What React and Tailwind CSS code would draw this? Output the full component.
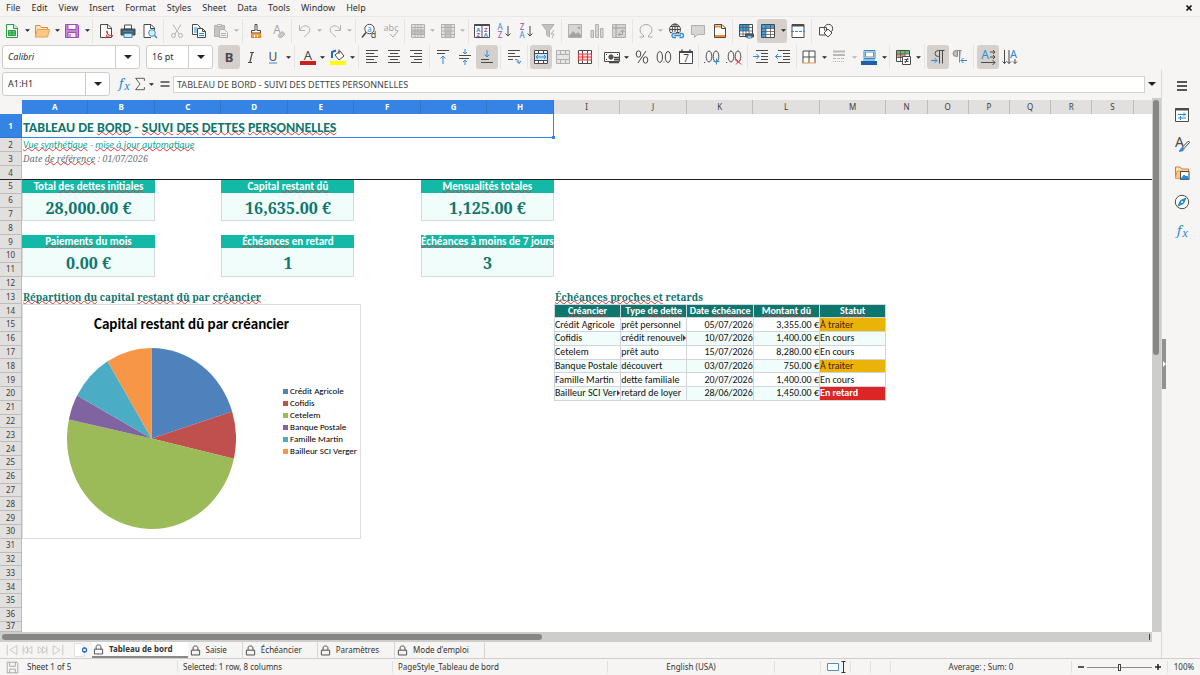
import React from "react";
import clsx from "clsx";

const GRAY = "#4a4a4a";
const BLUE = "#2a8dd4";

function Svg({ children, size = "size-4" }) {
  return (
    <svg viewBox="0 0 16 16" className={clsx("shrink-0 overflow-visible", size)} fill="none" stroke={GRAY} strokeWidth="1" aria-hidden="true">
      {children}
    </svg>
  );
}

function Glyph({ x = 8, y = 12, size = 12, color = GRAY, italic, bold, serif, children }) {
  return (
    <text
      x={x}
      y={y}
      fontSize={size}
      fill={color}
      stroke="none"
      textAnchor="middle"
      fontStyle={italic ? "italic" : "normal"}
      fontWeight={bold ? 700 : 400}
      fontFamily={serif ? "Noto Serif, Liberation Serif, serif" : "Noto Sans, sans-serif"}
    >
      {children}
    </text>
  );
}

/* horizontal strokes, each one is [x1, x2, y] */
function Lines({ rows, color = GRAY }) {
  return <path stroke={color} d={rows.map(([a, b, y]) => `M${a} ${y}H${b}`).join("")} />;
}

const icons = {
  newDoc: (
    <Svg>
      <path d="M2.500 1.500h7.500l3.500 3.500v9.500h-11z" fill="#fff" stroke="#2e9e44" />
      <path d="M9.500 1v4.500h4.500" stroke="#2e9e44" fill="#c9edcf" />
      <path d="M4.500 7.500h7v5h-7zM4.500 10h7M8 7.500v5" fill="#65c978" stroke="#2e9e44" />
    </Svg>
  ),
  open: (
    <Svg>
      <path d="M1.500 13.500v-11h4.500l1.500 2h6v2" fill="#fbe3bd" stroke="#e08b32" />
      <path d="M1 14l2.500-7.500h12l-2 7.500z" fill="#fbc985" stroke="#e9a052" />
    </Svg>
  ),
  save: (
    <Svg>
      <path d="M1.500 1.500h12l1 1v12h-13z" fill="#c782d6" stroke="#9c4fb5" />
      <path d="M4 1.500h8v5h-8z" fill="#fff" stroke="#9c4fb5" />
      <path d="M4 14.500v-5h8v5z" fill="#f5e7f8" stroke="#9c4fb5" />
      <path d="M6 11v3" stroke="#9c4fb5" />
    </Svg>
  ),
  pdf: (
    <Svg>
      <path d="M2.500 1.500h7.500l3.500 3.500v9.500h-11z" fill="#fff" />
      <path d="M9.500 1.500v4h4" />
      <path d="M7 15c1.500-2 3-4.500 2.500-6.500-.3-1.200-1.500-.5-1 .7.800 2 3.500 4 6.500 3.600-2-1-5 .2-8 2.200z" stroke="#e0343c" />
    </Svg>
  ),
  print: (
    <Svg>
      <path d="M4.500 2h7v4h-7z" fill="#fff" />
      <path d="M1 6h14v6h-14z" fill="#58595b" />
      <path d="M3 8.500h10" stroke={BLUE} />
      <path d="M4 10.500h8v4h-8z" fill="#cfe8fa" stroke={BLUE} />
    </Svg>
  ),
  preview: (
    <Svg>
      <path d="M12.500 7v-2l-3.500-3.500h-7v13h7" fill="#fff" />
      <path d="M8.500 1.500v4h4" />
      <circle cx="10" cy="10" r="3.300" fill="#d9effc" stroke={BLUE} />
      <path d="M12.500 12.500l2.500 2.500" stroke={BLUE} strokeWidth="1.500" />
    </Svg>
  ),
  cut: (
    <Svg>
      <g stroke="#b3b3b1">
        <path d="M4 1.500l6 9.500M12 1.500l-6 9.500" />
        <circle cx="4.500" cy="12.500" r="2" />
        <circle cx="11.500" cy="12.500" r="2" />
      </g>
    </Svg>
  ),
  copy: (
    <Svg>
      <path d="M1.500 1.500h5l2.500 2.500v7.500h-7.500z" fill="#fff" />
      <path d="M3 5h3M3 7h3M3 9h3" stroke={BLUE} />
      <path d="M6.500 5.500h5l3 3v6h-8z" fill="#fff" />
      <path d="M11.500 5.500v3h3" />
      <path d="M8 10.500h5M8 12.500h5" stroke={BLUE} />
    </Svg>
  ),
  paste: (
    <Svg>
      <path d="M1.500 2.500h10v11h-10z" fill="#c5c5c3" stroke="#b0b0ae" />
      <path d="M4.500 1.500h4v2h-4z" fill="#eee" stroke="#b0b0ae" />
      <path d="M6.500 6.500h5l3 3v5h-8z" fill="#f2f2f0" stroke="#b0b0ae" />
      <path d="M8 10.500h5M8 12.500h5" stroke="#b0b0ae" />
    </Svg>
  ),
  clone: (
    <Svg>
      <path d="M7 1.500h2v6h3.500v2.500h-9v-2.500h3.500z" fill="#fff" />
      <path d="M3.500 10.500h9v4h-9z" fill="#f7a44a" stroke="#e07c1c" />
      <path d="M6.500 12v2.500M9.500 12v2.500" stroke="#fff" />
    </Svg>
  ),
  clear: (
    <Svg>
      <Glyph x={7} y={11} size={12} color="#a8a8a6">A</Glyph>
      <path d="M8 12.500l4-4 3 2.500-3.500 3.500h-2z" fill="#c8c8c6" stroke="#b0b0ae" />
    </Svg>
  ),
  undo: (
    <Svg>
      <path d="M2.500 2v5.500h5.500M2.500 7.500c2-4.500 6-5.500 8.500-4s2.500 5-.5 7.500l-3.500 3" stroke="#b3b3b1" />
    </Svg>
  ),
  redo: (
    <Svg>
      <path d="M13.500 2v5.500h-5.500M13.500 7.500c-2-4.500-6-5.500-8.500-4s-2.500 5 .5 7.500l3.500 3" stroke="#b3b3b1" />
    </Svg>
  ),
  find: (
    <Svg>
      <circle cx="8.500" cy="6" r="4.700" fill="#fff" />
      <path d="M5 9.500l-4 5" strokeWidth="1.500" />
      <Glyph x={8.500} y={8.500} size={8} color={BLUE}>a</Glyph>
      <Glyph x={12.500} y={15} size={9}>d</Glyph>
    </Svg>
  ),
  spell: (
    <Svg>
      <Glyph x={8} y={7.500} size={9} color="#a8a8a6">abc</Glyph>
      <path d="M7 11l3 3 5-6" stroke="#a8a8a6" />
    </Svg>
  ),
  tableRow: (
    <Svg>
      <path d="M1.500 1.500h13v13h-13z" fill="#e4e4e2" stroke="#b0b0ae" />
      <path d="M2 6h12v5h-12z" fill="#c2c2c0" stroke="none" />
      <path d="M1.500 4.500h13M1.500 8h13M1.500 11.500h13M5 1.500v13M8 1.500v13M11 1.500v13" stroke="#b0b0ae" />
    </Svg>
  ),
  tableCol: (
    <Svg>
      <path d="M1.500 1.500h13v13h-13z" fill="#e4e4e2" stroke="#b0b0ae" />
      <path d="M5 2h6v12h-6z" fill="#c2c2c0" stroke="none" />
      <path d="M1.500 4.500h13M1.500 8h13M1.500 11.500h13M5 1.500v13M11 1.500v13" stroke="#b0b0ae" />
    </Svg>
  ),
  sort: (
    <Svg>
      <path d="M.5 1.500h15v13h-15z" fill="#fff" />
      <path d="M.5 2h15" strokeWidth="2" />
      <path d="M8 2v12.500" />
      <Glyph x={4.300} y={8.500} size={6} color={BLUE} bold>A</Glyph>
      <Glyph x={4.300} y={14} size={6} color="#a347ba" bold>Z</Glyph>
      <Glyph x={11.800} y={8.500} size={6} color="#a347ba" bold>Z</Glyph>
      <Glyph x={11.800} y={14} size={6} color={BLUE} bold>A</Glyph>
    </Svg>
  ),
  sortAsc: (
    <Svg>
      <Glyph x={4} y={7} size={8} color={BLUE}>A</Glyph>
      <Glyph x={4} y={15} size={8} color="#a347ba">Z</Glyph>
      <path d="M12 3v10M9.500 10.500l2.500 2.500 2.500-2.500" />
    </Svg>
  ),
  sortDesc: (
    <Svg>
      <Glyph x={4} y={7} size={8} color="#a347ba">Z</Glyph>
      <Glyph x={4} y={15} size={8} color={BLUE}>A</Glyph>
      <path d="M12 3v10M9.500 10.500l2.500 2.500 2.500-2.500" />
    </Svg>
  ),
  filter: (
    <Svg>
      <path d="M2 1.500h12l-4.500 6v6.500l-3-2v-4.500z" fill="#c2c2c0" stroke="#b0b0ae" />
      <path d="M14 7l-3 4h3l-2 4" stroke="#b0b0ae" />
    </Svg>
  ),
  image: (
    <Svg>
      <path d="M1.500 1.500h13v13h-13z" fill="#d6d6d4" stroke="#b0b0ae" />
      <path d="M2 13l4-5 3 3 2-2 3 3v2h-12z" fill="#a3a3a1" stroke="none" />
      <path d="M11 4l2 1.500" stroke="#a3a3a1" strokeWidth="2" />
    </Svg>
  ),
  chart: (
    <Svg>
      <path d="M2 7.500h2.500v7h-2.500zM6.500 1.500h3v13h-3zM11.500 5.500h2.500v9h-2.500z" fill="#d6d6d4" stroke="#b0b0ae" />
    </Svg>
  ),
  pivot: (
    <Svg>
      <path d="M1.500 1.500h13v13h-13z" fill="#d6d6d4" stroke="#b0b0ae" />
      <path d="M1.500 5h13M5 1.500v13M8 11.500h3.500v-4M9.500 9l2-2 2 2M9 9.500l-2 2 2 2" stroke="#9c9c9a" />
    </Svg>
  ),
  omega: (
    <Svg>
      <path d="M1.500 14h4v-1.500c-6-4-3.500-11 2.500-11s8.500 7 2.500 11v1.500h4" stroke="#a8a8a6" />
    </Svg>
  ),
  link: (
    <Svg>
      <circle cx="7" cy="6.500" r="5.500" />
      <path d="M1.500 6.500h11M7 1v11M2.500 3.500h9M2.500 9.500h9" />
      <ellipse cx="7" cy="6.500" rx="2.700" ry="5.500" />
      <path d="M8 10.500h-2a2 2 0 0 0 0 4h2M11.500 10.500h2a2 2 0 0 1 0 4h-2M7 12.500h6" stroke="#f6f5f4" strokeWidth="3" />
      <path d="M8 10.500h-2a2 2 0 0 0 0 4h2M11.500 10.500h2a2 2 0 0 1 0 4h-2M7 12.500h6" stroke={BLUE} strokeWidth="1.300" />
    </Svg>
  ),
  comment: (
    <Svg>
      <path d="M1.500 2.500h13v9h-7l-3 3v-3h-3z" fill="#d6d6d4" stroke="#b0b0ae" />
    </Svg>
  ),
  header: (
    <Svg>
      <path d="M2.500 1.500h7.500l3.500 3.500v9.500h-11z" fill="#fff" />
      <path d="M9.500 1.500v4h4" />
      <path d="M3 3.500h6M3 13h10" stroke="#f28c28" strokeWidth="2" />
    </Svg>
  ),
  printRange: (
    <Svg>
      <path d="M1.500 1.500h13v12h-13z" fill="#fff" />
      <path d="M2 2h9v6h-9z" fill="#3ea0e4" stroke="none" />
      <path d="M1.500 4.500h13M1.500 8h13M1.500 11h13M5 1.500v12M8 1.500v12M11 1.500v12" strokeWidth=".7" />
      <path d="M7.500 11h8v3h-8z" fill="#58595b" />
      <path d="M9.500 13h4v2h-4z" fill="#d9effc" stroke={BLUE} />
    </Svg>
  ),
  freeze: (
    <Svg>
      <path d="M1.500 1.500h13v13h-13z" fill="#fff" />
      <path d="M2 2h12v3.500h-8v8.500h-4z" fill="#3ea0e4" stroke="none" />
      <path d="M1.500 5.500h13M1.500 8.500h13M1.500 11.500h13M6 1.500v13M10.500 1.500v13" strokeWidth=".7" />
    </Svg>
  ),
  split: (
    <Svg>
      <path d="M2 1.500h12v13h-12z" fill="#fff" />
      <path d="M2 2.500h12" strokeWidth="2" />
      <path d="M1 8.500h14" stroke={BLUE} strokeDasharray="3 1" />
    </Svg>
  ),
  shapes: (
    <Svg>
      <path d="M1.500 4.500h7v7.500h-7z" fill="#fff" />
      <circle cx="10.500" cy="5.500" r="4.200" />
      <path d="M10 6l4 4-4 4-4-4z" fill="#fff" />
    </Svg>
  ),
  bold: <Svg><Glyph y={12.500} size={13} bold>B</Glyph></Svg>,
  italic: <Svg><path d="M7 3.500h4M5 13.500h4M9.300 3.500l-2.500 10" strokeWidth="1.200" /></Svg>,
  underline: (
    <Svg>
      <Glyph y={11.500} size={12}>U</Glyph>
      <path d="M4 14h8" stroke={BLUE} />
    </Svg>
  ),
  fontColor: (
    <Svg>
      <Glyph y={11} size={13}>A</Glyph>
      <path d="M0 14h16" stroke="#c9211e" strokeWidth="4" />
    </Svg>
  ),
  highlight: (
    <Svg>
      <path d="M5 6l5-4 4 5-5 4z" fill="#fff" />
      <path d="M9 5v-4.500" />
      <path d="M2 9v-6l4-1.500" stroke="#1d6fb8" strokeWidth="2" />
      <path d="M0 14h16" stroke="#ff0" strokeWidth="4" />
    </Svg>
  ),
  left: <Svg><Lines rows={[[2, 14, 1.500], [2, 10, 4.500], [2, 14, 7.500], [2, 10, 10.500], [2, 13, 13.500]]} /></Svg>,
  center: <Svg><Lines rows={[[2, 14, 1.500], [4, 12, 4.500], [2, 14, 7.500], [4, 12, 10.500], [2, 14, 13.500]]} /></Svg>,
  right: <Svg><Lines rows={[[2, 14, 1.500], [6, 14, 4.500], [2, 14, 7.500], [6, 14, 10.500], [3, 14, 13.500]]} /></Svg>,
  top: (
    <Svg>
      <Lines rows={[[2, 14, 1.500], [2, 10, 4.500]]} />
      <path d="M8 15v-8M5.500 9.500l2.500-2.500 2.500 2.500" stroke={BLUE} />
    </Svg>
  ),
  middle: (
    <Svg>
      <Lines rows={[[2, 14, 6.500], [2, 12, 9.500]]} />
      <path d="M8 0v5M6 3l2 2 2-2M8 16v-5M6 13l2-2 2 2" stroke={BLUE} />
    </Svg>
  ),
  bottom: (
    <Svg>
      <Lines rows={[[2, 10, 10.500], [2, 14, 13.500]]} />
      <path d="M8 1v7M5.500 5.500l2.500 2.500 2.500-2.500" stroke={BLUE} />
    </Svg>
  ),
  wrap: (
    <Svg>
      <Lines rows={[[2, 14, 1.500], [2, 9, 4.500], [2, 14, 7.500], [2, 7, 10.500]]} />
      <path d="M9 10.500c3 0 4 1 4 4M10.500 12l2.500 2.500 2-2.500" stroke={BLUE} />
    </Svg>
  ),
  merge: (
    <Svg>
      <path d="M1.500 1.500h13v13h-13zM1.500 4.500h13M1.500 11.500h13M5.500 1.500v3M10.500 1.500v3M5.500 11.500v3M10.500 11.500v3" fill="#fff" />
      <path d="M2 5h12v6h-12z" fill="#c9e6fb" stroke="none" />
      <path d="M3 8h10M5 6l-2 2 2 2M11 6l2 2-2 2" stroke={BLUE} />
    </Svg>
  ),
  mergeOff: (
    <Svg>
      <path d="M1.500 1.500h13v13h-13zM1.500 5.500h13M1.500 10.500h13M5.500 1.500v4M10.500 1.500v4M5.500 10.500v4M10.500 10.500v4" fill="#e6e6e4" stroke="#b0b0ae" />
    </Svg>
  ),
  unmerge: (
    <Svg>
      <path d="M1.500 1.500h13v13h-13z" fill="#fff" />
      <path d="M5.500 1.500v3M10.500 1.500v3M5.500 11.500v3M10.500 11.500v3" />
      <path d="M1.500 5h13v6h-13zM5.500 5v6M10.500 5v6M1.500 8h13" stroke="#e0343c" fill="#ffe4e2" />
    </Svg>
  ),
  currency: (
    <Svg>
      <path d="M.5 3.500h15v9h-15z" fill="#fff" />
      <circle cx="7" cy="8" r="2.200" fill="#58595b" />
      <path d="M2 5.500h1M13 5.500h1M2 10.500h1" />
      <path d="M10 8.500h5M10 10.500h5M10 12.500h5M5 13.500h10" strokeWidth="1.500" />
    </Svg>
  ),
  percent: (
    <Svg>
      <ellipse cx="4.500" cy="5" rx="2.300" ry="3.200" />
      <ellipse cx="11.500" cy="11" rx="2.300" ry="3.200" />
      <path d="M12 2l-8 12" />
    </Svg>
  ),
  number: (
    <Svg>
      <ellipse cx="3.800" cy="8" rx="2.700" ry="5.500" />
      <ellipse cx="12" cy="8" rx="2.700" ry="5.500" />
      <path d="M7.500 13h1" />
    </Svg>
  ),
  date: (
    <Svg>
      <path d="M1.500 2.500h13v12h-13z" fill="#fff" />
      <path d="M1 3h14" strokeWidth="2" />
      <path d="M4 .5v3M12 .5v3" strokeWidth="1.500" />
      <Glyph y={13} size={10}>7</Glyph>
    </Svg>
  ),
  addDecimal: (
    <Svg>
      <path d="M0 13.500h1.200" />
      <ellipse cx="5" cy="7.500" rx="2.800" ry="5.500" />
      <ellipse cx="12" cy="7.500" rx="2.800" ry="5.500" />
      <path d="M12.500 9.500v6M9.500 12.500h6" stroke={BLUE} />
    </Svg>
  ),
  delDecimal: (
    <Svg>
      <path d="M0 13.500h1.200" />
      <ellipse cx="5" cy="7.500" rx="2.800" ry="5.500" />
      <ellipse cx="12" cy="7.500" rx="2.800" ry="5.500" />
      <path d="M10 10l5 5.500M15 10l-5 5.500" stroke="#e0343c" />
    </Svg>
  ),
  indent: (
    <Svg>
      <Lines rows={[[3, 15, 1.500], [8, 15, 4.500], [8, 15, 7.500], [8, 15, 10.500], [3, 15, 13.500]]} />
      <path d="M0 7.500h6M3.500 5l2.500 2.500-2.500 2.500" stroke={BLUE} />
    </Svg>
  ),
  outdent: (
    <Svg>
      <Lines rows={[[3, 15, 1.500], [8, 15, 4.500], [8, 15, 7.500], [8, 15, 10.500], [3, 15, 13.500]]} />
      <path d="M6.500 7.500h-6M3 5l-2.500 2.500 2.500 2.500" stroke={BLUE} />
    </Svg>
  ),
  borders: (
    <Svg>
      <path d="M2 14v-12h12v12M8 2v12M2 8h12" fill="#fff" />
      <path d="M1.500 14h13" stroke="#e09a4a" />
    </Svg>
  ),
  borderStyle: (
    <Svg>
      <path d="M2 2.500h12M2 6h12" stroke="#b8b8b6" strokeWidth="2" />
      <path d="M2 9.500h12" stroke="#b8b8b6" strokeDasharray="3 1" />
      <path d="M2 12.500h12" stroke="#b8b8b6" strokeDasharray="1 1" />
    </Svg>
  ),
  borderColor: (
    <Svg>
      <path d="M3 1.500h11v8h-11z" fill="#e9f4fc" stroke={BLUE} />
      <path d="M4.500 3h8v5h-8z" fill="#fff" stroke="#888" />
      <path d="M0 14h16" stroke="#1d5fa8" strokeWidth="4" />
      <path d="M2 11h12" stroke={BLUE} />
    </Svg>
  ),
  conditional: (
    <Svg>
      <path d="M1.500 1.500h13v11h-13z" fill="#fff" />
      <path d="M2 2h12v3h-12z" fill="#62c46f" stroke="none" />
      <path d="M2 5h8v4h-8z" fill="#f08a80" stroke="none" />
      <path d="M1.500 5h13M1.500 8.500h13M5.500 1.500v11M10 1.500v11" strokeWidth=".7" />
      <path d="M7.500 7.500h8v8h-8z" fill="#fff" />
      <path d="M9.500 10.500h4M9.500 12.500h4M13 9l-3 5" />
    </Svg>
  ),
  ltr: (
    <Svg>
      <path d="M14.500 1.500h-6a3.500 3 0 0 0 0 6h1M9.500 1.500v13M12.500 1.500v13" />
      <path d="M1 11.500h6M4.500 9l2.500 2.500-2.500 2.500" stroke={BLUE} />
    </Svg>
  ),
  rtl: (
    <Svg>
      <path d="M9.500 1.500h-5a3.500 3 0 0 0 0 6h1v-6h2v12" fill="#bcbcba" stroke="#8a8a88" />
      <path d="M15 11.500h-6M11.500 9l-2.500 2.500 2.500 2.500" stroke={BLUE} />
    </Svg>
  ),
  textH: (
    <Svg>
      <Glyph x={5} y={10} size={12} color={BLUE}>A</Glyph>
      <path d="M10 3h5M13 1l2 2-2 2M10 8h5M13 6l2 2-2 2M1 13.500h14M12.500 11l2.500 2.500-2.500 2.500" />
    </Svg>
  ),
  textV: (
    <Svg>
      <Glyph x={11.500} y={9} size={11} color={BLUE}>A</Glyph>
      <path d="M2.500 1v13.500M.5 12.500l2 2 2-2M7 1v13.500M5 12.500l2 2 2-2M13 10v4.500M11 12.500l2 2 2-2" />
    </Svg>
  ),
  properties: (
    <Svg>
      <path d="M1.500 1.500h13v13h-13z" fill="#fff" />
      <path d="M1 2.500h14" strokeWidth="2" />
      <path d="M4 7.500h8M4 11h8M10 5.500v4M6.500 9v4" stroke={BLUE} />
    </Svg>
  ),
  styles: (
    <Svg>
      <Glyph x={5.500} y={11} size={14}>A</Glyph>
      <path d="M14.500 5l-6 6 1.500 1.500 5.500-6z" fill="#fff" />
      <path d="M8 11.500l2 2c-1 1.500-3 2-5 1.500 1.500-.5 1.500-2.500 3-3.500z" fill={BLUE} stroke={BLUE} />
    </Svg>
  ),
  gallery: (
    <Svg>
      <path d="M1.500 13.500v-11.500h4.500l1.500 2h7v2" fill="#fbe3bd" stroke="#e0762c" />
      <path d="M1.500 13.500l1.500-7.500h6v7.500z" fill="#fbc985" stroke="#e9a052" />
      <path d="M6.500 6.500h8.500v8h-8.500z" fill="#fff" />
      <path d="M7 14l3-4 2 2 1-1 2 3z" fill={BLUE} stroke={BLUE} />
    </Svg>
  ),
  navigator: (
    <Svg>
      <circle cx="8" cy="8" r="6.700" fill="#fff" />
      <path d="M12 4l-2.500 5.500-5.500 2.500 2.500-5.500z" fill={BLUE} stroke={BLUE} />
      <circle cx="8" cy="8" r="1" fill="#fff" stroke="none" />
    </Svg>
  ),
  fx: (
    <Svg>
      <Glyph x={5} y={12} size={13} color={BLUE} italic serif>f</Glyph>
      <Glyph x={11} y={14} size={11} color={BLUE} italic serif>x</Glyph>
    </Svg>
  ),
  sum: <Svg size="size-3.5"><path d="M13 4.500v-3h-10l5 6.500-5 6.500h10v-3" /></Svg>,
  equals: <Svg><path d="M3.500 6h9M3.500 10h9" strokeWidth="1.500" /></Svg>,
  lock: (
    <Svg size="size-[11px]">
      <path d="M2 7.500h12v7h-12zM4.500 7.500v-3.500c0-3.500 7-3.500 7 0v3.500" strokeWidth="1.400" />
    </Svg>
  ),
};

// i: icon, l: label, m: has a drop-down arrow, on: pressed, off: disabled
const standardBar = [
  { w: "w-[93px]", tools: [{ i: "newDoc", l: "New", m: 1 }, { i: "open", l: "Open", m: 1 }, { i: "save", l: "Save", m: 1 }] },
  { w: "w-[71px]", tools: [{ i: "pdf", l: "Export as PDF" }, { i: "print", l: "Print" }, { i: "preview", l: "Print preview" }] },
  { w: "w-[79px]", tools: [{ i: "cut", l: "Cut", off: 1 }, { i: "copy", l: "Copy" }, { i: "paste", l: "Paste", m: 1, off: 1 }] },
  { w: "w-[49px]", tools: [{ i: "clone", l: "Clone formatting" }, { i: "clear", l: "Clear formatting", off: 1 }] },
  { w: "w-[64px]", tools: [{ i: "undo", l: "Undo", m: 1, off: 1 }, { i: "redo", l: "Redo", m: 1, off: 1 }] },
  { w: "w-[49px]", tools: [{ i: "find", l: "Find and replace" }, { i: "spell", l: "Spelling", off: 1 }] },
  { w: "w-[64px]", tools: [{ i: "tableRow", l: "Row", m: 1, off: 1 }, { i: "tableCol", l: "Column", m: 1, off: 1 }] },
  { w: "w-[93px]", tools: [{ i: "sort", l: "Sort" }, { i: "sortAsc", l: "Sort ascending" }, { i: "sortDesc", l: "Sort descending" }, { i: "filter", l: "AutoFilter", off: 1 }] },
  { w: "w-[71px]", tools: [{ i: "image", l: "Image", off: 1 }, { i: "chart", l: "Chart", off: 1 }, { i: "pivot", l: "Pivot table", off: 1 }] },
  { w: "w-[100px]", tools: [{ i: "omega", l: "Special character", m: 1, off: 1 }, { i: "link", l: "Hyperlink" }, { i: "comment", l: "Comment", off: 1 }, { i: "header", l: "Headers and footers" }] },
  { w: "w-[79px]", tools: [{ i: "printRange", l: "Print area" }, { i: "freeze", l: "Freeze panes", m: 1, on: 1 }, { i: "split", l: "Split window" }] },
  { w: "w-[27px]", last: 1, tools: [{ i: "shapes", l: "Draw functions" }] },
];

const formatBar = [
  { w: "w-[79px]", tools: [{ i: "bold", l: "Bold", on: 1 }, { i: "italic", l: "Italic" }, { i: "underline", l: "Underline", m: 1 }] },
  { w: "w-[64px]", tools: [{ i: "fontColor", l: "Font color", m: 1 }, { i: "highlight", l: "Background color", m: 1 }] },
  { w: "w-[71px]", tools: [{ i: "left", l: "Align left" }, { i: "center", l: "Center" }, { i: "right", l: "Align right" }] },
  { w: "w-[71px]", tools: [{ i: "top", l: "Align top" }, { i: "middle", l: "Center vertically" }, { i: "bottom", l: "Align bottom", on: 1 }] },
  { w: "w-[27px]", tools: [{ i: "wrap", l: "Wrap text" }] },
  { w: "w-[71px]", tools: [{ i: "merge", l: "Merge and center", on: 1 }, { i: "mergeOff", l: "Merge cells", off: 1 }, { i: "unmerge", l: "Unmerge cells" }] },
  { w: "w-[100px]", tools: [{ i: "currency", l: "Currency", m: 1 }, { i: "percent", l: "Percent" }, { i: "number", l: "Number" }, { i: "date", l: "Date" }] },
  { w: "w-[49px]", tools: [{ i: "addDecimal", l: "Add decimal place" }, { i: "delDecimal", l: "Delete decimal place" }] },
  { w: "w-[49px]", tools: [{ i: "indent", l: "Increase indent" }, { i: "outdent", l: "Decrease indent" }] },
  { w: "w-[93px]", tools: [{ i: "borders", l: "Borders", m: 1 }, { i: "borderStyle", l: "Border style", m: 1, off: 1 }, { i: "borderColor", l: "Border color", m: 1 }] },
  { w: "w-[35px]", tools: [{ i: "conditional", l: "Conditional", m: 1 }] },
  { w: "w-[49px]", tools: [{ i: "ltr", l: "Left to right", on: 1 }, { i: "rtl", l: "Right to left" }] },
  { w: "w-[49px]", last: 1, tools: [{ i: "textH", l: "Text left to right", on: 1 }, { i: "textV", l: "Text top to bottom" }] },
];

function Caret({ off, big }) {
  return (
    <svg viewBox="0 0 8 4" className={clsx("shrink-0", big ? "w-2 h-1" : "w-[5px] h-[3px]")} aria-hidden="true">
      <path d="M0 0h8l-4 4z" fill={off ? "#b3b3b1" : "#222"} />
    </svg>
  );
}

function Tool({ i, l, m, on, off }) {
  return (
    <button
      type="button"
      aria-label={l}
      disabled={Boolean(off)}
      className={clsx("flex h-6 items-center rounded-[3px]", on && "bg-[#d5d0cc]")}
    >
      <span className="flex w-[22px] justify-center">{icons[i]}</span>
      {m && (
        <span className="flex w-2 justify-center">
          <Caret off={off} />
        </span>
      )}
    </button>
  );
}

function ToolGroups({ groups }) {
  return groups.map(({ w, last, tools }) => (
    <div key={tools[0].i} className={clsx("flex h-6 shrink-0 items-center justify-center", w, !last && "border-r border-[#e6e5e3]")}>
      {tools.map((tool) => (
        <Tool key={tool.i} {...tool} />
      ))}
    </div>
  ));
}

function Combo({ label, value, width, italic }) {
  return (
    <div className={clsx("flex h-6 shrink-0 overflow-hidden rounded-[3px] border border-[#cfccc9] bg-white", width)}>
      <input
        aria-label={label}
        defaultValue={value}
        className={clsx("min-w-0 flex-1 bg-transparent px-[5px] text-[9px] text-[#2e2e2e] outline-none", italic && "italic")}
      />
      <button type="button" aria-label={`${label} list`} className="flex w-6 items-center justify-center border-l border-[#cfccc9]">
        <Caret big />
      </button>
    </div>
  );
}

/* words wrapped in *stars* get the spell checker's wave */
function Spell({ text }) {
  return text.split("*").map((part, n) =>
    n % 2 ? (
      <span key={n} className="underline decoration-[#e03a3a] decoration-wavy decoration-1 underline-offset-[-1px] [text-decoration-skip-ink:none]">
        {part}
      </span>
    ) : (
      part
    )
  );
}

const menus = ["File", "Edit", "View", "Insert", "Format", "Styles", "Sheet", "Data", "Tools", "Window", "Help"];
const columns = "ABCDEFGHIJKLMNOPQRS".split("");
const rowNumbers = Array.from({ length: 37 }, (_, n) => n + 1);

const kpis = [
  { label: "Total *des dettes initiales*", value: "28,000.00 €", at: "col-start-2 row-start-6" },
  { label: "Capital *restant dû*", value: "16,635.00 €", at: "col-start-5 row-start-6" },
  { label: "*Mensualités totales*", value: "1,125.00 €", at: "col-start-8 row-start-6" },
  { label: "*Paiements* du *mois*", value: "0.00 €", at: "col-start-2 row-start-10" },
  { label: "*Échéances* en retard", value: "1", at: "col-start-5 row-start-10" },
  { label: "*Échéances à moins* de 7 *jours*", value: "3", at: "col-start-8 row-start-10" },
];

const debts = [
  { name: "Crédit Agricole", type: "prêt personnel", date: "05/07/2026", amount: "3,355.00 €", status: "À traiter", value: 3355, color: "#4f81bd" },
  { name: "Cofidis", type: "crédit renouvel", cutType: true, date: "10/07/2026", amount: "1,400.00 €", status: "En cours", value: 1400, color: "#c0504d" },
  { name: "Cetelem", type: "prêt auto", date: "15/07/2026", amount: "8,280.00 €", status: "En cours", value: 8280, color: "#9bbb59" },
  { name: "Banque Postale", type: "découvert", date: "03/07/2026", amount: "750.00 €", status: "À traiter", value: 750, color: "#8064a2" },
  { name: "Famille Martin", type: "dette familiale", date: "20/07/2026", amount: "1,400.00 €", status: "En cours", value: 1400, color: "#4bacc6" },
  { name: "Bailleur SCI Verger", cell: "Bailleur SCI Ver", cutName: true, type: "retard de loyer", date: "28/06/2026", amount: "1,450.00 €", status: "En retard", value: 1450, color: "#f79646" },
];

const statusStyle = {
  "À traiter": "bg-[#eab308] text-[#422006]",
  "En cours": "",
  "En retard": "bg-[#dc2626] text-white font-bold",
};

function Pie() {
  const total = debts.reduce((sum, d) => sum + d.value, 0);
  let start = 0;
  const point = (t) => `${100 + 100 * Math.sin(t)} ${100 - 100 * Math.cos(t)}`;
  return (
    <svg viewBox="0 0 200 200" preserveAspectRatio="none" className="h-[181px] w-[169px] shrink-0" role="img" aria-label="Capital restant dû par créancier">
      {debts.map((d) => {
        const end = start + (d.value / total) * 2 * Math.PI;
        const path = `M100 100L${point(start)}A100 100 0 ${end - start > Math.PI ? 1 : 0} 1 ${point(end)}Z`;
        start = end;
        return <path key={d.name} d={path} fill={d.color} />;
      })}
    </svg>
  );
}

function Chart() {
  return (
    <div className="z-10 col-span-6 col-start-2 row-span-17 row-start-15 w-[85%] border border-[#dedede] bg-white">
      <h2 className="mt-[9px] text-center font-[Carlito,Lato,sans-serif] text-[15px] leading-5 font-bold text-black">Capital restant dû par créancier</h2>
      <div className="mt-[14px] flex pl-11">
        <Pie />
        <ul className="mt-[37px] ml-[47px] font-[Carlito,Lato,sans-serif] text-[9px] leading-[12px] whitespace-nowrap text-black">
          {debts.map((d) => (
            <li key={d.name} className="flex items-center gap-[2px]">
              <svg viewBox="0 0 5 5" className="size-[5px]" aria-hidden="true">
                <rect width="5" height="5" fill={d.color} />
              </svg>
              {d.name}
            </li>
          ))}
        </ul>
      </div>
    </div>
  );
}

function Overflowing({ cut, children }) {
  return (
    <div className="flex items-center justify-between">
      {children}
      {cut && (
        <svg viewBox="0 0 3 6" className="h-[6px] w-[3px] shrink-0" aria-hidden="true">
          <path d="M0 0l3 3-3 3z" fill="#a3151c" />
        </svg>
      )}
    </div>
  );
}

function DebtTable() {
  return (
    <table className="col-span-5 col-start-10 row-span-7 row-start-15 h-full w-full table-fixed border-collapse font-[Carlito,Lato,sans-serif] text-[10px] leading-[12px] whitespace-nowrap text-[#111]">
      <thead>
        <tr className="bg-[#0f766e] text-white">
          {["*Créancier*", "Type *de dette*", "Date *échéance*", "*Montant dû*", "*Statut*"].map((h) => (
            <th key={h} className="border border-[#cfd8dc] p-0 font-bold">
              <Spell text={h} />
            </th>
          ))}
        </tr>
      </thead>
      <tbody>
        {debts.map((d, n) => (
          <tr key={d.name} className={clsx(n % 2 === 1 && "bg-[#f0fdfa]")}>
            <td className="border border-[#d1d5db] p-0"><Overflowing cut={d.cutName}>{d.cell || d.name}</Overflowing></td>
            <td className="border border-[#d1d5db] p-0"><Overflowing cut={d.cutType}>{d.type}</Overflowing></td>
            <td className="border border-[#d1d5db] p-0 text-right">{d.date}</td>
            <td className="border border-[#d1d5db] p-0 text-right">{d.amount}</td>
            <td className={clsx("border border-[#d1d5db] p-0", statusStyle[d.status])}>{d.status}</td>
          </tr>
        ))}
      </tbody>
    </table>
  );
}

function Sheet() {
  return (
    <div className="grid min-h-0 flex-1 grid-cols-[22px_repeat(13,minmax(0,665fr))_repeat(6,minmax(0,412fr))_minmax(0,185fr)] grid-rows-[14px_24px_14px_14px_14px_repeat(32,minmax(0,4fr))_minmax(0,3fr)] overflow-hidden bg-white">
      <div className="col-start-1 row-start-1 bg-[#f6f5f4]" />
      {columns.map((c, n) => (
        <div
          key={c}
          className={clsx(
            "row-start-1 flex items-center justify-center border-r text-[8px]",
            n < 8 ? "border-[#2f76cd] bg-[#3584e4] font-bold text-white" : "border-[#bdbcba] bg-[#e1e0df] text-[#3c3c3c]"
          )}
        >
          {c}
        </div>
      ))}
      <div className="row-start-1 bg-[#e1e0df]" />
      {rowNumbers.map((r) => (
        <div
          key={r}
          className={clsx(
            "col-start-1 flex items-center justify-center overflow-hidden border-r border-b text-[8px] leading-none",
            r === 1 ? "border-[#2f76cd] bg-[#3584e4] font-bold text-white" : "border-[#bdbcba] bg-[#e1e0df] text-[#3c3c3c]",
            r === 4 && "border-b-[#222]"
          )}
        >
          {r}
        </div>
      ))}

      <div className="relative col-span-8 col-start-2 row-start-2 flex items-end border-r border-b border-[#3584e4]">
        <h1 className="pl-px font-[Carlito,Lato,sans-serif] text-[14px] leading-[18px] font-bold whitespace-nowrap text-[#0f766e]">
          <Spell text="TABLEAU DE *BORD* - *SUIVI* *DES* *DETTES* *PERSONNELLES*" />
        </h1>
        <span className="absolute -right-0.5 -bottom-0.5 size-[3px] bg-[#3584e4]" />
      </div>
      <p className="col-span-8 col-start-2 row-start-3 pl-px font-[Carlito,Lato,sans-serif] text-[10px] leading-[14px] whitespace-nowrap text-[#14a898] italic">
        <Spell text="*Vue synthétique* - *mise à jour automatique*" />
      </p>
      <p className="col-span-8 col-start-2 row-start-4 pl-px font-[Noto_Serif,Liberation_Serif,serif] text-[9px] leading-[14px] whitespace-nowrap text-[#6b7280] italic">
        <Spell text="Date *de référence* : 01/07/2026" />
      </p>
      <div className="col-start-2 -col-end-1 row-start-5 border-b border-[#222]" />

      {kpis.map((k) => (
        <div key={k.label} className={clsx("col-span-2 row-span-3 flex flex-col whitespace-nowrap", k.at)}>
          <div className="flex h-[13px] justify-center bg-[#14b8a6] font-[Carlito,Lato,sans-serif] text-[11px] leading-[13px] font-bold text-white">
            <span>
              <Spell text={k.label} />
            </span>
          </div>
          <div className="flex flex-1 items-center justify-center border-x border-b border-[#d5dbdb] bg-[#f0fdfa] pt-0.5 font-[Noto_Serif,Liberation_Serif,serif] text-[16px] leading-none font-bold text-[#0f766e]">
            {k.value}
          </div>
        </div>
      ))}

      <h2 className="col-span-8 col-start-2 row-start-14 pl-px font-[Noto_Serif,Liberation_Serif,serif] text-[10px] leading-[14px] font-bold whitespace-nowrap text-[#0f766e]">
        <Spell text="*Répartition du* capital *restant* *dû* par *créancier*" />
      </h2>
      <h2 className="col-span-5 col-start-10 row-start-14 pl-px font-[Noto_Serif,Liberation_Serif,serif] text-[10px] leading-[14px] font-bold whitespace-nowrap text-[#0f766e]">
        <Spell text="*Échéances proches et* retards" />
      </h2>
      <Chart />
      <DebtTable />
    </div>
  );
}

function SheetTabs() {
  return (
    <nav className="flex h-4 shrink-0 items-stretch bg-[#f6f5f4] pl-[5px] text-[8px] text-[#333]">
      <div className="flex w-[69px] items-center">
        {["M2 2v12M13 3l-8 5 8 5z", "M3 3v10M8 4l-5 4 5 4zM13 4l-5 4 5 4z", "M13 3v10M3 4l5 4-5 4zM8 4l5 4-5 4z", "M14 2v12M3 3l8 5-8 5z"].map((d, n) => (
          <button key={d} type="button" disabled aria-label={["First sheet", "Previous sheet", "Next sheet", "Last sheet"][n]}>
            <svg viewBox="0 0 16 16" className="h-3.5 w-[15px]" fill="none" stroke="#c4c3c1" aria-hidden="true">
              <path d={d} />
            </svg>
          </button>
        ))}
      </div>
      <button type="button" aria-label="Add sheet" className="flex w-[18px] items-center">
        <svg viewBox="0 0 14 14" className="size-3.5" fill="none" aria-hidden="true">
          <path d="M.5 .5h6.500l3 3v10h-9.500z" fill="#fff" stroke="#e2e1df" />
          <circle cx="10.500" cy="7" r="2" fill="#fff" stroke="#2a6fc0" strokeWidth="1.300" />
          <path d="M10.500 4v1.500M10.500 8.500v1.500" stroke="#2a6fc0" />
        </svg>
      </button>
      {["Tableau de bord", "Saisie", "Échéancier", "Paramètres", "Mode d'emploi"].map((t, n) => (
        <button
          key={t}
          type="button"
          className={clsx(
            "flex items-center gap-[5px] pr-[15px] whitespace-nowrap",
            n === 0 ? "border-b-2 border-[#8a8a88] bg-white pl-px font-bold" : "border-r border-r-[#d5d4d2] pl-[2px]"
          )}
        >
          {icons.lock}
          {t}
        </button>
      ))}
    </nav>
  );
}

function StatusBar() {
  return (
    <footer className="flex h-[17px] shrink-0 items-center border-t border-[#cfcecc] text-[8px] whitespace-nowrap text-[#333]">
      <div className="flex h-3 w-[178px] items-center gap-2 border-r border-[#e2e1df] pl-[6px]">
        <svg viewBox="0 0 16 16" className="size-[13px]" fill="none" stroke="#9a9a98" aria-hidden="true">
          <path d="M1.500 1.500h12l1 1v12h-13zM4.500 1.500v5h7v-5M4.500 14.500v-4.500h7v4.500" />
        </svg>
        Sheet 1 of 5
      </div>
      <div className="flex h-3 w-[215px] items-center border-r border-[#e2e1df] pl-[5px]">Selected: 1 row, 8 columns</div>
      <div className="flex h-3 w-[215px] items-center border-r border-[#e2e1df] pl-[5px]">PageStyle_Tableau de bord</div>
      <div className="flex h-3 flex-1 items-center justify-center border-r border-[#e2e1df]">English (USA)</div>
      <div className="h-3 w-[46px] border-r border-[#e2e1df]" />
      <div className="flex h-3 w-[30px] items-center border-r border-[#e2e1df] pl-[6px]">
        <svg viewBox="0 0 22 14" className="h-3.5 w-[22px]" fill="none" aria-hidden="true">
          <path d="M.5 3.500h11v7h-11z" stroke="#4a90c8" fill="#fff" />
          <path d="M14.500 1.500h4M16.500 1.500v11M14.500 12.500h4" stroke="#333" />
        </svg>
      </div>
      <div className="h-3 w-5 border-r border-[#e2e1df]" />
      <div className="h-3 w-5 border-r border-[#e2e1df]" />
      <div className="flex h-3 w-[181px] items-center justify-center border-r border-[#e2e1df]">Average: ; Sum: 0</div>
      <div className="flex h-3 items-center gap-[2px] border-r border-[#e2e1df] px-[5px]">
        <button type="button" aria-label="Zoom out" className="flex">
          <svg viewBox="0 0 8 8" className="size-2" aria-hidden="true"><path d="M1 4h6" stroke="#222" strokeWidth="1.500" /></svg>
        </button>
        <input
          type="range"
          aria-label="Zoom"
          defaultValue="50"
          className="h-px w-[65px] appearance-none bg-[#8a8a88] [&::-webkit-slider-thumb]:h-[7px] [&::-webkit-slider-thumb]:w-[3px] [&::-webkit-slider-thumb]:appearance-none [&::-webkit-slider-thumb]:border [&::-webkit-slider-thumb]:border-[#444] [&::-webkit-slider-thumb]:bg-white"
        />
        <button type="button" aria-label="Zoom in" className="flex">
          <svg viewBox="0 0 8 8" className="size-2" aria-hidden="true"><path d="M1 4h6M4 1v6" stroke="#222" strokeWidth="1.500" /></svg>
        </button>
      </div>
      <span className="w-8 text-center">100%</span>
    </footer>
  );
}

export default function App() {
  return (
    <div className="flex h-screen flex-col overflow-hidden bg-[#f6f5f4] font-[Noto_Sans,sans-serif] text-[#2e2e2e]">
      <header className="flex h-[17px] shrink-0 items-center justify-between border-b border-[#e9e8e6] pr-[7px] pl-[6px] text-[9px]">
        <div className="flex gap-[11px]">
          {menus.map((m) => (
            <button key={m} type="button">{m}</button>
          ))}
        </div>
        <button type="button" aria-label="Close document">
          <svg viewBox="0 0 8 8" className="size-2" aria-hidden="true"><path d="M1.500 1.500l5 5M6.500 1.500l-5 5" stroke="#111" strokeWidth="1.700" /></svg>
        </button>
      </header>
      <div className="flex h-[27px] shrink-0 items-center">
        <ToolGroups groups={standardBar} />
      </div>
      <div className="flex h-[26px] shrink-0 items-center pl-[2px]">
        <Combo label="Font name" value="Calibri" width="w-[138px] mr-[6px]" italic />
        <Combo label="Font size" value="16 pt" width="w-[67px] mr-[3px]" />
        <ToolGroups groups={formatBar} />
      </div>
      <div className="flex min-h-0 flex-1">
        <main className="flex min-w-0 flex-1 flex-col">
          <div className="flex h-7 shrink-0 items-center pr-[5px] pl-[2px]">
            <Combo label="Name box" value="A1:H1" width="w-[108px] mr-[6px]" />
            <button type="button" aria-label="Function wizard">{icons.fx}</button>
            <button type="button" aria-label="Select function" className="flex items-center gap-px">
              <span className="flex size-4 items-center justify-center">{icons.sum}</span>
              <Caret />
            </button>
            <button type="button" aria-label="Formula" className="ml-[3px]">{icons.equals}</button>
            <input
              aria-label="Formula input"
              defaultValue="TABLEAU DE BORD - SUIVI DES DETTES PERSONNELLES"
              className="h-[17px] min-w-0 flex-1 border border-[#d5d3d0] bg-white px-[3px] text-[9px] text-[#444] outline-none"
            />
            <button type="button" aria-label="Expand formula bar" className="ml-[3px]"><Caret big /></button>
          </div>
          <div className="flex min-h-0 flex-1">
            <div className="flex min-w-0 flex-1 flex-col pt-0.5">
              <Sheet />
              <div className="flex h-[10px] shrink-0 items-center justify-between bg-[#cdcdcc] px-0.5">
                <div className="h-[6px] w-[47%] rounded-full bg-[#868785]" />
                <div className="h-[6px] w-px bg-[#444]" />
              </div>
            </div>
            <div className="mb-[10px] w-[9px] shrink-0 bg-[#cdcdcc] px-px pt-0.5">
              <div className="h-[48%] w-[6px] rounded-full bg-[#868785]" />
            </div>
          </div>
          <SheetTabs />
        </main>
        <aside className="flex w-[39px] shrink-0 border-l border-[#dad8d6]">
          <button type="button" aria-label="Hide sidebar" className="flex h-[50px] w-1 items-center justify-center self-center bg-[#929391]">
            <svg viewBox="0 0 3 6" className="h-[6px] w-[3px]" aria-hidden="true"><path d="M0 0l3 3-3 3z" fill="#fff" /></svg>
          </button>
          <div className="flex flex-1 flex-col items-center gap-[13px] pt-2 pr-[3px]">
            <button type="button" aria-label="Sidebar settings">
              <Svg><path d="M3 4h10M3 8h10M3 12h10" stroke="#222" strokeWidth="1.500" /></Svg>
            </button>
            {["properties", "styles", "gallery", "navigator", "fx"].map((name) => (
              <button key={name} type="button" aria-label={name}>{icons[name]}</button>
            ))}
          </div>
        </aside>
      </div>
      <StatusBar />
    </div>
  );
}
